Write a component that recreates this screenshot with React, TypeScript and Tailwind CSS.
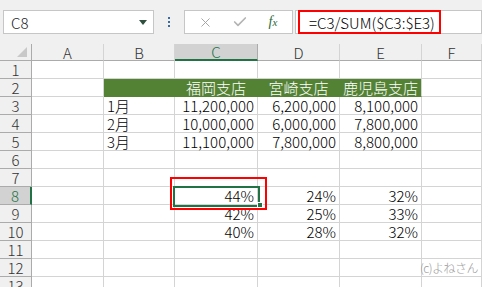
import { X, Check } from 'lucide-react';

const cols = ['A', 'B', 'C', 'D', 'E', 'F'];
const widths = ['w-[72px]', 'w-[71px]', 'w-[83px]', 'w-[82px]', 'w-[82px]', 'w-[60px]'];

type Row = { n: number; cells: (string | null)[] };

const rows: Row[] = [
  { n: 1, cells: [null, null, null, null, null, null] },
  { n: 2, cells: [null, '', '福岡支店', '宮崎支店', '鹿児島支店', null] },
  { n: 3, cells: [null, '1月', '11,200,000', '6,200,000', '8,100,000', null] },
  { n: 4, cells: [null, '2月', '10,000,000', '6,000,000', '7,800,000', null] },
  { n: 5, cells: [null, '3月', '11,100,000', '7,800,000', '8,800,000', null] },
  { n: 6, cells: [null, null, null, null, null, null] },
  { n: 7, cells: [null, null, null, null, null, null] },
  { n: 8, cells: [null, null, '44%', '24%', '32%', null] },
  { n: 9, cells: [null, null, '42%', '25%', '33%', null] },
  { n: 10, cells: [null, null, '40%', '28%', '32%', null] },
  { n: 11, cells: [null, null, null, null, null, null] },
  { n: 12, cells: [null, null, null, null, null, null] },
  { n: 13, cells: [null, null, null, null, null, null] },
];

function Cell({ row, col, value }: { row: number; col: number; value: string | null }) {
  const header = row === 2 && col >= 1 && col <= 4;
  const label = col === 1 && !header;
  return (
    <div
      className={`${widths[col]} h-[18px] shrink-0 border-b border-r border-[#d4d4d4] flex items-center px-[3px] text-[15px] leading-none font-light ${
        header ? 'bg-[#548235] border-b-[#548235] text-white justify-center' : 'bg-white text-black'
      } ${header && col < 4 ? 'border-r-[#548235]' : ''} ${label ? 'justify-start' : header ? '' : 'justify-end'}`}
    >
      {value}
    </div>
  );
}

export default function App() {
  return (
    <div className="w-[482px] h-[287px] overflow-hidden bg-[#f0f0f0] font-['Noto_Sans_CJK_JP',sans-serif]">
      <div className="h-[44px] flex items-start pt-[10px]">
        <div className="ml-[3px] w-[151px] h-[24px] bg-white border border-[#c6c6c6] flex items-center justify-between pl-[7px] pr-[6px]">
          <span className="text-[15px] text-[#222] leading-none font-light">C8</span>
          <svg width="8" height="5" viewBox="0 0 8 5">
            <path d="M0 0h8L4 5z" fill="#2f4f3f" />
          </svg>
        </div>
        <div className="w-[30px] h-[24px] flex flex-col items-center justify-center gap-[2px]">
          <span className="w-[2px] h-[2px] bg-[#3b6ba0]" />
          <span className="w-[2px] h-[2px] bg-[#3b6ba0]" />
          <span className="w-[2px] h-[2px] bg-[#3b6ba0]" />
        </div>
        <div className="w-[109px] h-[24px] bg-white border border-[#c6c6c6] flex items-center">
          <div className="w-[40px] flex justify-center">
            <X size={15} strokeWidth={1.5} color="#a0a0a0" />
          </div>
          <div className="w-[30px] flex justify-center">
            <Check size={16} strokeWidth={2.5} color="#b4b4b4" />
          </div>
          <div className="w-[36px] flex justify-center">
            <span className="font-['Liberation_Serif',serif] italic text-[14px] text-[#2e6b3c] leading-none">
              f<span className="text-[11px]">x</span>
            </span>
          </div>
        </div>
        <div className="ml-[2px] flex-1 h-[24px] bg-white border border-[#c6c6c6] flex items-center">
          <div className="ml-[2px] w-[143px] h-[24px] border-2 border-[#ff0000] flex items-center pl-[9px]">
            <span className="text-[15px] text-black leading-none font-light">=C3/SUM($C3:$E3)</span>
          </div>
        </div>
      </div>

      <div className="relative">
        <div className="flex h-[17px]">
          <div className="w-[32px] shrink-0 border-r border-b border-[#ababab] relative">
            <svg className="absolute right-[4px] bottom-[3px]" width="10" height="10" viewBox="0 0 10 10">
              <path d="M10 0V10H0z" fill="#c8c8c8" />
            </svg>
          </div>
          {cols.map((c, i) => (
            <div
              key={c}
              className={`${widths[i]} shrink-0 flex items-center justify-center text-[15px] leading-none font-light border-r ${
                c === 'C'
                  ? 'bg-[#d2d2d2] text-[#217346] border-b-2 border-b-[#217346] border-r-[#ababab]'
                  : 'text-[#333] border-b border-[#ababab] border-r-[#d4d4d4]'
              }`}
            >
              {c}
            </div>
          ))}
        </div>
        {rows.map((r) => (
          <div key={r.n} className="flex">
            <div
              className={`w-[32px] h-[18px] shrink-0 flex items-center justify-center text-[15px] leading-none font-light border-b ${
                r.n === 8
                  ? 'bg-[#d2d2d2] text-[#217346] border-r-2 border-r-[#217346] border-b-[#ababab]'
                  : 'text-[#333] border-r border-[#ababab]'
              }`}
            >
              {r.n}
            </div>
            {r.cells.map((v, i) => (
              <Cell key={i} row={r.n} col={i} value={v} />
            ))}
          </div>
        ))}

        <div className="absolute left-[170px] top-[133px] w-[97px] h-[33px] border-2 border-[#ff0000] pointer-events-none" />
        <div className="absolute left-[173px] top-[142px] w-[87px] h-[21px] border-2 border-[#217346] pointer-events-none" />
        <div className="absolute left-[257px] top-[158px] w-[6px] h-[6px] bg-[#217346] border border-white" />
        <div className="absolute left-[420px] top-[218px] whitespace-nowrap text-[12px] tracking-[-0.5px] text-[#9a9a9a] leading-none font-light">
          (c)よねさん
        </div>
      </div>
    </div>
  );
}
